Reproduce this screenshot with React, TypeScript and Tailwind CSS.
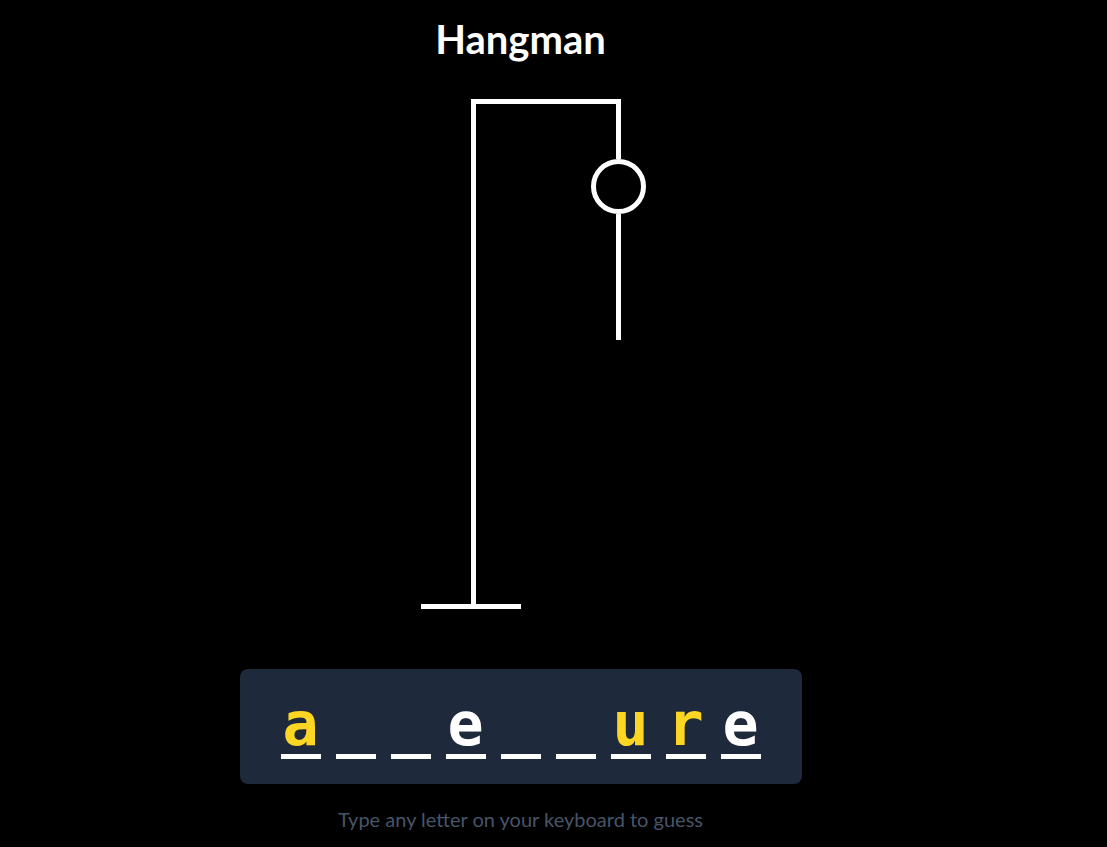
import React from "react";

const WORD = ["a", "", "", "e", "", "", "u", "r", "e"];
// letters the player guessed are yellow, letters revealed at the end are white
const GUESSED = new Set(["a", "u", "r"]);

function Gallows() {
  return (
    <svg
      width={251}
      height={525}
      viewBox="395 90 251 525"
      fill="none"
      stroke="white"
      strokeWidth={5}
      className="mt-[31px] block"
    >
      <path d="M473.5 606.5 V101.5 H618.5 V159" strokeLinejoin="miter" />
      <line x1={421} y1={606.5} x2={521} y2={606.5} />
      <circle cx={618.5} cy={186.5} r={25} />
      <line x1={618.5} y1={214} x2={618.5} y2={340} />
    </svg>
  );
}

export default function App() {
  return (
    <div className="min-h-screen bg-black">
      <div className="w-[1041px] flex flex-col items-center pt-[19px] font-['Lato',sans-serif]">
        <h1 className="text-[40px] leading-10 font-bold text-white">Hangman</h1>

        <Gallows />

        <div className="mt-[54px] flex gap-[15px] rounded-lg bg-[#1e293b] px-[41px] py-[25px]">
          {WORD.map((ch, i) => (
            <span
              key={i}
              className={`w-10 border-b-[5px] border-white text-center text-6xl leading-none font-bold font-['DejaVu_Sans_Mono',monospace] ${
                GUESSED.has(ch) ? "text-[#fcd622]" : "text-white"
              }`}
            >
              {ch || "\u00a0"}
            </span>
          ))}
        </div>

        <p className="mt-[21px] text-xl text-[#475569]">Type any letter on your keyboard to guess</p>
      </div>
    </div>
  );
}
